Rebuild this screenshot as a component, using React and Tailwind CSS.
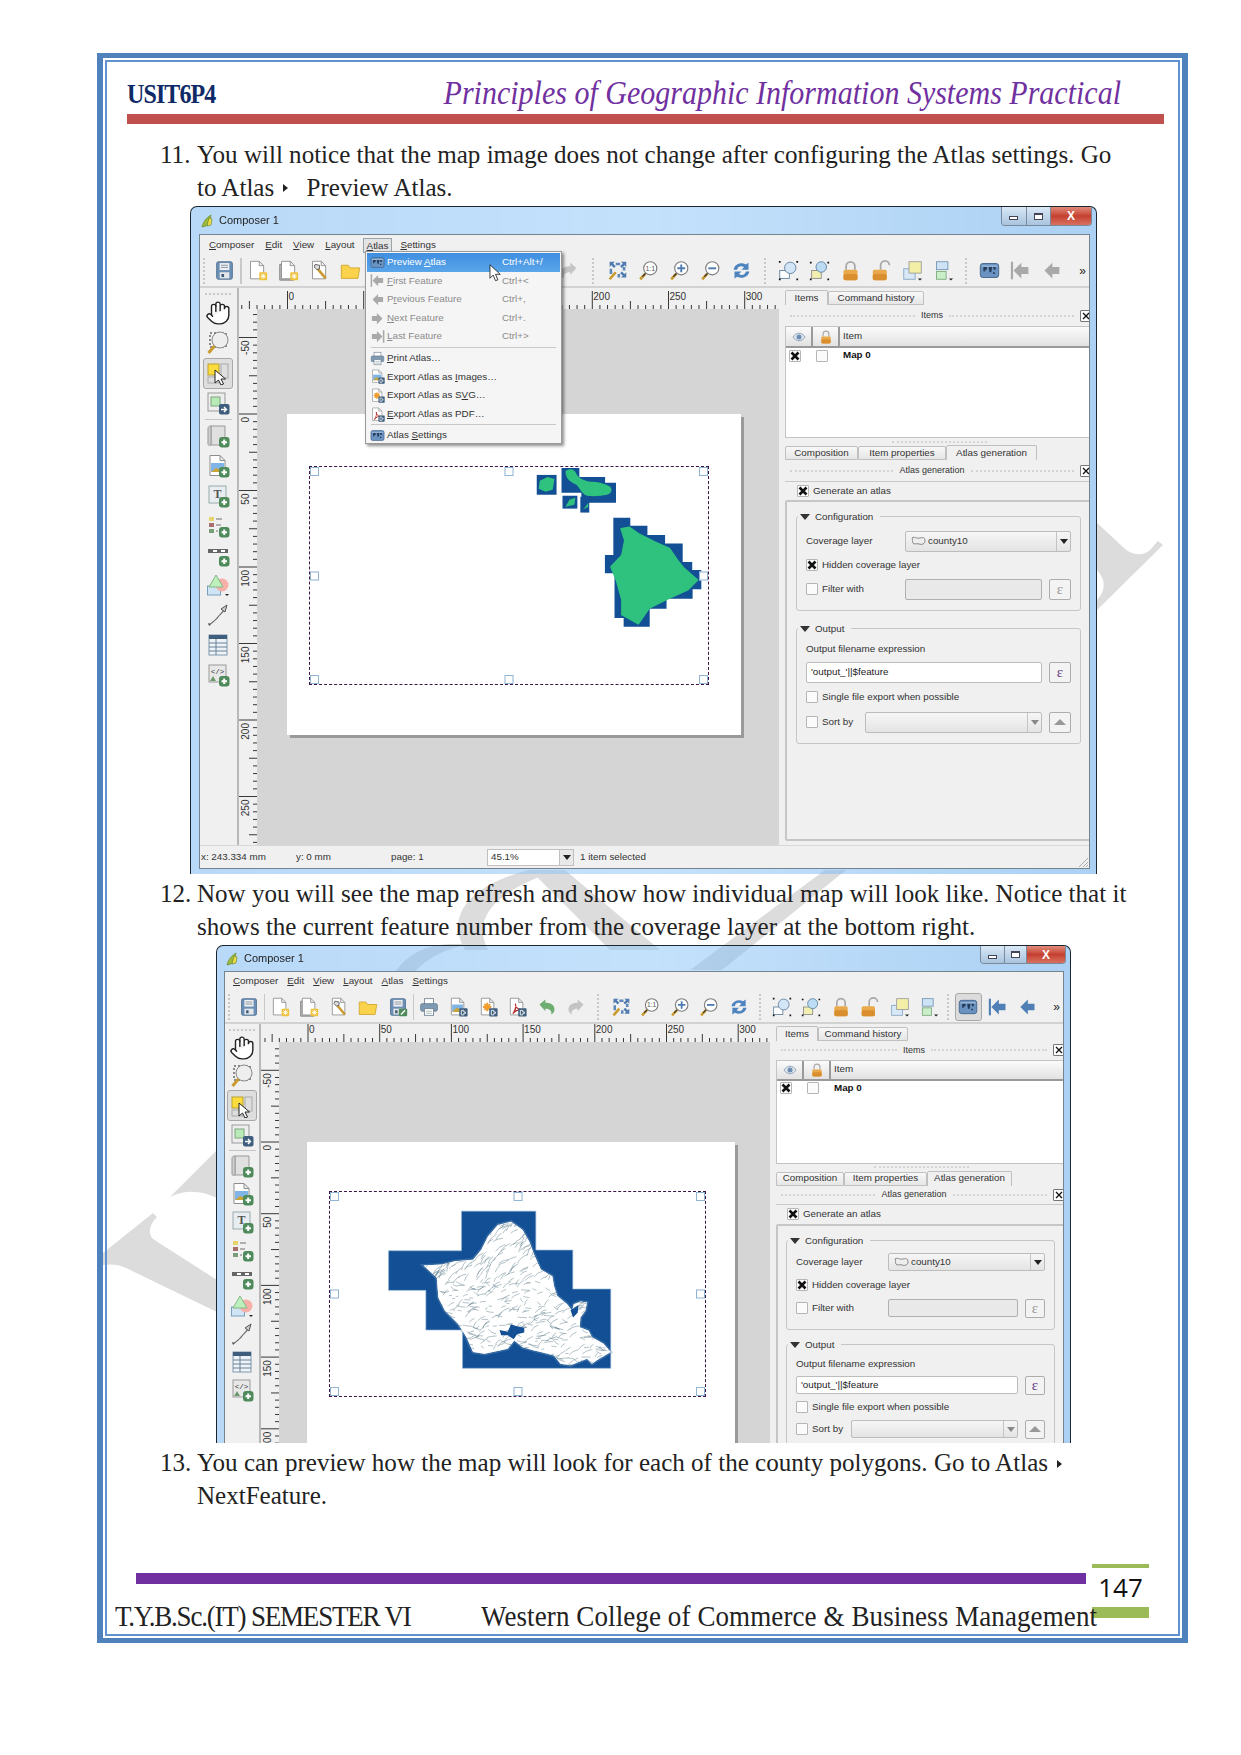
import { Hand } from "lucide-react";

const big = {
  win: "w-[907px] h-[668px]",
  titleBar: "h-[27px] pl-[9px]",
  winBtns: "w-[91px] h-[19px]",
  client: "ml-[8px] mr-[6px] h-[635px]",
  menuBar: "h-[20px] pl-[9px] gap-[11px]",
  toolBar: "h-[33px]",
  cell: "w-[31px]",
  iconSize: 21,
  g0: "w-[9px]",
  g1: "w-[18px]",
  g2: "w-[16px]",
  g3: "w-[15px]",
  side: "w-[37px] pr-[1px]",
  tool: "h-[29.8px]",
  canvasWrap: "w-[542px]",
  rulerTop: "h-[21px]",
  panel: "w-[314px]",
  tabs1: "h-[15px]",
  tItems: "w-[43px]",
  tCmd: "w-[96px]",
  dock: "h-[21px]",
  treeHead: "h-[21px]",
  tree: "h-[112px]",
  split: "h-[7px]",
  tabs2: "h-[15px]",
  tComp: "w-[73px]",
  tProp: "w-[88px]",
  tAtlas: "w-[91px]",
  genRow: "h-[18px] pl-[12px]",
  box: "pt-[14px] px-[9px] h-[341px] gap-[17px]",
  group1: "h-[95px] pt-[14px] gap-[4px]",
  group2: "h-[116px] pt-[12px] gap-[5px]",
  labelCol: "w-[99px]",
  rowH: "h-[20px]",
  fieldH: "h-[21px]",
  eps: "w-[22px] h-[21px]",
  sortLabel: "w-[59px]",
  status: "h-[23px]",
};

const small = {
  win: "w-[855px] h-[498px]",
  titleBar: "h-[25px] pl-[8px]",
  winBtns: "w-[86px] h-[18px]",
  client: "ml-[7px] mr-[6px] h-[473px] border-b-0",
  menuBar: "h-[19px] pl-[8px] gap-[9px]",
  toolBar: "h-[33px]",
  cell: "w-[29.5px]",
  iconSize: 20,
  g0: "w-[9px]",
  g1: "w-[15px]",
  g2: "w-[13.5px]",
  g3: "w-[9.5px]",
  side: "w-[34px]",
  tool: "h-[28px]",
  canvasWrap: "w-[511px]",
  rulerTop: "h-[18px]",
  panel: "w-[296px]",
  tabs1: "h-[15px]",
  tItems: "w-[42px]",
  tCmd: "w-[90px]",
  dock: "h-[18.5px]",
  treeHead: "h-[20px]",
  tree: "h-[104px]",
  split: "h-[7px]",
  tabs2: "h-[15px]",
  tComp: "w-[68px]",
  tProp: "w-[83px]",
  tAtlas: "w-[85px]",
  genRow: "h-[18.5px] pl-[11px]",
  box: "pt-[14px] px-[8px] h-[340px] gap-[14px]",
  group1: "h-[90px] pt-[12px] gap-[4px]",
  group2: "h-[116px] pt-[12px] gap-[3px]",
  labelCol: "w-[92px]",
  rowH: "h-[19px]",
  fieldH: "h-[18px]",
  eps: "w-[20px] h-[19px]",
  sortLabel: "w-[55px]",
  status: "h-[23px]",
};

const plus = (
  <g>
    <rect x="13" y="13" width="10.5" height="10.5" rx="3" fill="#4f8a5b" />
    <path d="M18.2 15.5v5.5M15.5 18.2h5.5" stroke="#fff" strokeWidth="2" />
  </g>
);
const badge = (
  <g>
    <rect x="13.5" y="13.5" width="10" height="10" rx="1" fill="#3f5d7c" />
    <path d="M16 16h3v2h2v1.5h-2v2h-3z" fill="none" stroke="#fff" strokeWidth="1" />
  </g>
);
const doc = <path d="M4 1.5h10l5 5v15H4z M14 1.5v5h5" fill="#fff" stroke="#8d8d8d" />;
const star = (
  <g>
    <rect x="14" y="14" width="9" height="9" rx="1" fill="#efc23e" />
    <path d="M18.5 15.5v6M15.5 18.5h6M16.3 16.3l4.4 4.4M20.7 16.3l-4.4 4.4" stroke="#fff" strokeWidth="1" />
  </g>
);
const lens = (
  <g>
    <circle cx="14" cy="9.5" r="7.5" fill="#fff" stroke="#7d7d7d" strokeWidth="1.3" />
    <path d="M8.5 15.5L2.5 22" stroke="#c99a2e" strokeWidth="3" />
    <path d="M8.5 15.5L5 19" stroke="#333" strokeWidth="1.5" />
  </g>
);
const saveShape = (
  <g>
    <rect x="3" y="2" width="18" height="20" rx="2" fill="#6b8fb5" stroke="#50708f" />
    <rect x="6.5" y="3.5" width="11" height="8" fill="#eef0f2" />
    <path d="M8 6h8M8 8.5h8" stroke="#7d8b99" />
    <rect x="6.5" y="14" width="11" height="7" fill="#e4e7ea" />
    <rect x="8.5" y="16" width="3" height="3.5" fill="#3e5a75" />
  </g>
);

function arrowIcon(color, mirrored, bar) {
  return (
    <g transform={mirrored ? "translate(24 0) scale(-1 1)" : undefined}>
      <path d="M20 12l-9-9v5H3v8h8v5z" fill={color} />
      {bar && <rect x="20.5" y="2" width="2.5" height="20" fill={color} />}
    </g>
  );
}

const glyphs = {
  save: saveShape,
  saveAs: (
    <g>
      {saveShape}
      <rect x="13" y="14" width="10" height="9" rx="1" fill="#4f8a5b" />
      <path d="M15.5 21l5-5" stroke="#fff" strokeWidth="1.6" />
    </g>
  ),
  newDoc: <g>{doc}{star}</g>,
  dup: (
    <g>
      <path d="M2 5h3v16h13v2H2z" fill="#bbb" stroke="#7a7a7a" />
      {doc}
      {star}
    </g>
  ),
  manager: (
    <g>
      {doc}
      <path d="M9 9l10 12" stroke="#c99a2e" strokeWidth="3" />
      <path d="M7 5l5 1 0 4-3 1-3-3z" fill="#ddd" stroke="#555" />
    </g>
  ),
  folder: <path d="M1.5 6h8l2 3h11l-2 12H1.5z" fill="#fbd24c" stroke="#cfa52b" />,
  print: (
    <g>
      <rect x="6.5" y="2" width="11" height="7" fill="#fff" stroke="#708090" />
      <rect x="2" y="8" width="20" height="9" rx="2" fill="#7f9ab3" stroke="#5d7890" />
      <rect x="6.5" y="14" width="11" height="8" fill="#fff" stroke="#708090" />
      <path d="M8.5 17h7M8.5 19.5h7" stroke="#9aa" />
    </g>
  ),
  expImg: (
    <g>
      {doc}
      <rect x="5" y="9" width="13" height="9" fill="#7fb4e6" />
      <path d="M5 18l5-5 8 3v2z" fill="#c9a43a" />
      {badge}
    </g>
  ),
  expSvg: (
    <g>
      {doc}
      <path d="M11 7v10M6 12h10M7.5 8.5l7 7M14.5 8.5l-7 7" stroke="#ef9d2f" strokeWidth="2.4" />
      {badge}
    </g>
  ),
  expPdf: (
    <g>
      {doc}
      <path d="M7 20c3-4 4-9 3-12 0 4 3 7 7 7-4 0-7 1-10 5z" fill="none" stroke="#b8312f" strokeWidth="1.5" />
      {badge}
    </g>
  ),
  undo: <path d="M3 9l7-6v4c7 0 11 3 11 8 0 3-2 5-4 6 1-4-1-7-7-7v3z" fill="#6fae72" />,
  redo: <path d="M21 9l-7-6v4C7 7 3 10 3 15c0 3 2 5 4 6-1-4 1-7 7-7v3z" fill="#c4c4c4" />,
  zoomFull: (
    <g>
      <path d="M3 2h6L7 4l3 3-2 2-3-3-2 2zM22 2v6l-2-2-3 3-2-2 3-3-2-2zM22 20h-6l2-2-3-3 2-2 3 3 2-2z" fill="#4f7bb0" />
      <path d="M3 10h3v6H3zM18 8h3v4h-3zM10 3h5v3h-5zM12 16h3v4h-3z" fill="#5f88ba" />
      <path d="M10 14L3 22" stroke="#c99a2e" strokeWidth="3" />
    </g>
  ),
  zoom11: (
    <g>
      {lens}
      <text x="14" y="12.5" fontSize="8" textAnchor="middle" fill="#555" fontFamily="Liberation Sans">1:1</text>
    </g>
  ),
  zoomIn: (
    <g>
      {lens}
      <path d="M14 5v9M9.5 9.5h9" stroke="#4f7bb0" strokeWidth="2.2" />
    </g>
  ),
  zoomOut: (
    <g>
      {lens}
      <path d="M9.5 9.5h9" stroke="#4f7bb0" strokeWidth="2.2" />
    </g>
  ),
  refresh: (
    <g fill="#4d84bf">
      <path d="M3 11c1-6 8-9 14-6l3-2v8h-8l3-3c-4-2-7-1-8 3z" />
      <path d="M21 13c-1 6-8 9-14 6l-3 2v-8h8l-3 3c4 2 7 1 8-3z" />
    </g>
  ),
  select: (
    <g>
      <rect x="2" y="12" width="11" height="9" fill="#fff" stroke="#5d7d9c" />
      <circle cx="14" cy="9" r="6.5" fill="#d3e6f7" stroke="#5d7d9c" />
      <path d="M1 2h2M21 2h2M1 22h2M21 22h2" stroke="#111" strokeWidth="2" />
    </g>
  ),
  selectIn: (
    <g>
      <rect x="3" y="12" width="11" height="9" fill="#f3efb0" stroke="#888" />
      <circle cx="14" cy="8" r="6" fill="#bcdcf5" stroke="#5d7d9c" />
      <path d="M1 3h2M21 3h2M1 22h2M21 22h2" stroke="#111" strokeWidth="2" />
    </g>
  ),
  lock: (
    <g>
      <path d="M7 11V7a5 5 0 0 1 10 0v4" fill="none" stroke="#a8a8a8" strokeWidth="2" />
      <rect x="4" y="11" width="16" height="12" rx="2" fill="#e9a849" />
      <rect x="4" y="16" width="16" height="7" rx="2" fill="#d98f2f" />
    </g>
  ),
  unlock: (
    <g>
      <path d="M11 11V6a5 5 0 0 1 10 0" fill="none" stroke="#a8a8a8" strokeWidth="2" />
      <rect x="2" y="11" width="16" height="12" rx="2" fill="#e9a849" />
      <rect x="2" y="16" width="16" height="7" rx="2" fill="#d98f2f" />
    </g>
  ),
  raise: (
    <g>
      <rect x="2" y="10" width="13" height="12" fill="#d8e8f6" stroke="#85a5c3" />
      <rect x="8" y="2" width="14" height="13" fill="#f4efa7" stroke="#999" />
      <path d="M18 21h5l-2.5 2.5z" fill="#222" />
    </g>
  ),
  align: (
    <g>
      <rect x="4" y="2" width="13" height="9" fill="#cfe3f6" stroke="#6f93b3" />
      <rect x="4" y="13" width="11" height="9" fill="#c8efc8" stroke="#7ca67c" />
      <path d="M18 21h5l-2.5 2.5z" fill="#222" />
    </g>
  ),
  atlas: (
    <g>
      <rect x="1.5" y="4" width="21" height="16" rx="3" fill="#6a93c2" stroke="#3f5f85" />
      <path d="M5 8h4v3H7v2H5zM11 8h4l-1 6h-2zM16 8h3v3h-2zM16 14h2v2h-2z" fill="#243b58" />
      <path d="M3 7h18" stroke="#b7cde5" />
    </g>
  ),
  hand: null,
  magnify: (
    <g>
      <rect x="4" y="2" width="16" height="14" fill="none" stroke="#222" strokeDasharray="2 2" />
      <circle cx="14" cy="9" r="8" fill="#eee" stroke="#8a8a8a" />
      <path d="M8.5 15L2.5 22" stroke="#c99a2e" strokeWidth="3" />
    </g>
  ),
  pointer: (
    <g>
      <rect x="2" y="3" width="11" height="11" fill="#fbdc3d" stroke="#b9a12e" />
      <rect x="15" y="3" width="7" height="14" fill="none" stroke="#aaa" />
      <rect x="2" y="16" width="11" height="6" fill="none" stroke="#aaa" />
      <path d="M9 9v13l3.5-3 2.5 5 2.5-1-2.5-5h4.5z" fill="#fff" stroke="#222" />
    </g>
  ),
  moveItem: (
    <g>
      <rect x="2" y="2" width="17" height="18" fill="#eee" stroke="#999" />
      <rect x="5" y="6" width="9" height="9" fill="#b8eab8" stroke="#7ca67c" />
      <rect x="13" y="13" width="10.5" height="10.5" rx="2" fill="#3f5d7c" />
      <path d="M15 18.5h5M18 16l2.5 2.5L18 21" stroke="#fff" strokeWidth="1.4" fill="none" />
    </g>
  ),
  addMap: (
    <g>
      <path d="M5 2h14v19H5z" fill="#e0e0e0" stroke="#999" />
      <path d="M5 2c-3 0-3 2-3 3v15c0 1 1 2 3 1z" fill="#d0d0d0" stroke="#999" />
      {plus}
    </g>
  ),
  addImage: (
    <g>
      {doc}
      <rect x="5" y="9" width="13" height="9" fill="#7fb4e6" />
      <path d="M5 18l5-4 8 3v1z" fill="#c9a43a" />
      {plus}
    </g>
  ),
  addLabel: (
    <g>
      <rect x="3" y="2" width="17" height="17" fill="#e8edf2" stroke="#9aa" />
      <text x="11.5" y="14" fontSize="12" fontWeight="bold" textAnchor="middle" fill="#555" fontFamily="Liberation Serif">T</text>
      {plus}
    </g>
  ),
  addLegend: (
    <g>
      <rect x="3" y="3" width="5" height="4" fill="#e6d36b" />
      <rect x="3" y="9" width="5" height="4" fill="#a86e6e" />
      <rect x="3" y="15" width="5" height="4" fill="#7a9d7a" />
      <path d="M10 5h6M10 11h5M10 17h2" stroke="#999" strokeWidth="1.5" />
      {plus}
    </g>
  ),
  addScale: (
    <g>
      <rect x="2" y="6" width="20" height="4" fill="#666" />
      <path d="M7 8h4M15 8h4" stroke="#fff" strokeWidth="2" />
      {plus}
    </g>
  ),
  addShape: (
    <g>
      <rect x="1.5" y="13" width="13" height="9" fill="#cfe5f6" stroke="#7aa0c0" />
      <circle cx="16" cy="12" r="6.5" fill="#f6b0a8" />
      <path d="M10 2l7 12H3z" fill="#bdf0bd" stroke="#85b885" />
      <path d="M19 21h4l-2 2z" fill="#222" />
    </g>
  ),
  addArrow: (
    <g>
      <path d="M3 22c4-3 7-5 9-8s5-4 8-10" fill="none" stroke="#666" strokeWidth="1.2" />
      <path d="M21 2l-2 7-4-3z" fill="#ccc" stroke="#555" />
      <path d="M2 20l3 1-2 2z" fill="#555" />
    </g>
  ),
  addTable: (
    <g>
      <rect x="3" y="2" width="18" height="20" fill="#eef3f7" stroke="#7f98ad" />
      <rect x="3" y="2" width="18" height="4" fill="#3f5d7c" />
      <path d="M3 10h18M3 14h18M3 18h18M10 6v16" stroke="#6b8096" />
    </g>
  ),
  addHtml: (
    <g>
      <rect x="3" y="2" width="17" height="17" fill="#e8e8e8" stroke="#999" />
      <text x="11.5" y="11" fontSize="7.5" textAnchor="middle" fill="#333" fontFamily="Liberation Mono">&lt;/&gt;</text>
      <path d="M4 18l3-5 3 5z" fill="#6c9a6c" />
      {plus}
    </g>
  ),
};

function Icon({ name, size = 21 }) {
  if (name === "hand") return <Hand size={size + 2} strokeWidth={1.3} color="#222" fill="#fff" />;
  if (name === "first") return <svg width={size} height={size} viewBox="0 0 24 24">{arrowIcon("#a9a9a9", true, true)}</svg>;
  if (name === "prev") return <svg width={size} height={size} viewBox="0 0 24 24">{arrowIcon("#a9a9a9", true, false)}</svg>;
  if (name === "firstOn") return <svg width={size} height={size} viewBox="0 0 24 24">{arrowIcon("#4f7fb5", true, true)}</svg>;
  if (name === "prevOn") return <svg width={size} height={size} viewBox="0 0 24 24">{arrowIcon("#4f7fb5", true, false)}</svg>;
  if (name === "next") return <svg width={size} height={size} viewBox="0 0 24 24">{arrowIcon("#a9a9a9", false, false)}</svg>;
  if (name === "last") return <svg width={size} height={size} viewBox="0 0 24 24">{arrowIcon("#a9a9a9", false, true)}</svg>;
  return <svg width={size} height={size} viewBox="0 0 24 24">{glyphs[name]}</svg>;
}

function Grip({ className = "" }) {
  return (
    <div className={`flex justify-center items-center h-full shrink-0 ${className}`}>
      <div className="w-[3px] h-[26px] border-l-2 border-dotted border-[#c8c8c8]" />
    </div>
  );
}

function Tool({ cfg, name, pressed }) {
  return (
    <div className={`flex items-center justify-center shrink-0 ${cfg.cell}`}>
      <div className={`flex items-center justify-center w-[27px] h-[28px] rounded-[3px] ${pressed ? "bg-[#dcdcdc] border border-[#a8a8a8]" : ""}`}>
        <Icon name={name} size={cfg.iconSize} />
      </div>
    </div>
  );
}

function Toolbar({ cfg, atlasOn }) {
  const t = (name) => <Tool cfg={cfg} name={name} key={name} />;
  return (
    <div className={`flex items-center border-b-2 border-[#d2d2d2] ${cfg.toolBar}`}>
      <Grip className={cfg.g0} />
      {t("save")}
      <div className="w-[1.5px] h-[26px] bg-[#c8c8c8] shrink-0" />
      {["newDoc", "dup", "manager", "folder", "saveAs"].map(t)}
      <div className="w-[1.5px] h-[26px] bg-[#c8c8c8] shrink-0" />
      {["print", "expImg", "expSvg", "expPdf", "undo", "redo"].map(t)}
      <Grip className={cfg.g1} />
      {["zoomFull", "zoom11", "zoomIn", "zoomOut", "refresh"].map(t)}
      <Grip className={cfg.g2} />
      {["select", "selectIn", "lock", "unlock", "raise", "align"].map(t)}
      <Grip className={cfg.g3} />
      {atlasOn ? (
        <>
          <Tool cfg={cfg} name="atlas" pressed />
          {t("firstOn")}
          {t("prevOn")}
        </>
      ) : (
        <>
          {t("atlas")}
          {t("first")}
          {t("prev")}
        </>
      )}
      <div className="flex-1 text-right pr-[3px] text-[12px] text-[#222]">»</div>
    </div>
  );
}

function SideBar({ cfg }) {
  const tools = ["hand", "magnify", "pointer", "moveItem", "addMap", "addImage", "addLabel", "addLegend", "addScale", "addShape", "addArrow", "addTable", "addHtml"];
  return (
    <div className={`flex flex-col items-center shrink-0 ${cfg.side}`}>
      <div className="h-[8px] w-[26px] mt-[2px] border-t-2 border-dotted border-[#c8c8c8] translate-y-[3px]" />
      {tools.map((name) => (
        <div key={name} className="flex flex-col items-center">
          {name === "addMap" && <div className="w-[27px] h-[1px] bg-[#c4c4c4] my-[1px]" />}
          <div className={`flex items-center justify-center w-[30px] ${cfg.tool} ${name === "pointer" ? "bg-[#dedede] border border-[#a8a8a8] rounded-[3px] h-[31px]" : ""}`}>
            <Icon name={name} size={24} />
          </div>
        </div>
      ))}
    </div>
  );
}

function HRuler({ width, zero, scale, labels }) {
  const ticks = [];
  for (let mm = -50; zero + (mm * scale) / 50 < width; mm += 5) {
    const x = zero + (mm * scale) / 50;
    if (x < 0) continue;
    const h = mm % 50 === 0 ? 18 : mm % 25 === 0 ? 8 : 4;
    ticks.push(<line key={mm} x1={x} x2={x} y1={20 - h} y2={20} stroke="#222" strokeWidth="0.9" />);
  }
  return (
    <svg width={width} height="20" className="block shrink-0">
      {ticks}
      {labels.map((l) => (
        <text key={l} x={zero + (l * scale) / 50 + 1} y="11" fontSize="10" fill="#333" fontFamily="Liberation Sans">{l}</text>
      ))}
    </svg>
  );
}

function VRuler({ height, zero, scale }) {
  const ticks = [];
  const labels = [];
  for (let mm = -150; zero + (mm * scale) / 50 < height; mm += 5) {
    const y = zero + (mm * scale) / 50;
    if (y < 0) continue;
    const major = mm % 50 === 0;
    const w = major ? 18 : mm % 25 === 0 ? 8 : 4;
    ticks.push(<line key={mm} x1={18 - w} x2={18} y1={y} y2={y} stroke="#222" strokeWidth="0.9" />);
    if (major) {
      labels.push(
        <text key={mm} transform={`translate(10 ${y + 3}) rotate(-90)`} textAnchor="end" fontSize="10" fill="#333" fontFamily="Liberation Sans">{mm}</text>
      );
    }
  }
  return (
    <svg width="18" height={height} className="block shrink-0 overflow-visible">
      {ticks}
      {labels}
    </svg>
  );
}

function Handles() {
  const spots = [
    "left-0 top-0",
    "left-1/2 -translate-x-1/2 top-0",
    "right-0 top-0",
    "left-0 top-1/2 -translate-y-1/2",
    "right-0 top-1/2 -translate-y-1/2",
    "left-0 bottom-0",
    "left-1/2 -translate-x-1/2 bottom-0",
    "right-0 bottom-0",
  ];
  return spots.map((s) => <div key={s} className={`absolute w-[9px] h-[9px] border border-[#8fb4d4] bg-white ${s}`} />);
}

function HawaiiMap() {
  const bx = (x) => x / 2.703 + 190;
  const by = (y) => y / 3 + 500;
  const pts = (list) => list.map(([x, y]) => `${bx(x).toFixed(1)},${by(y).toFixed(1)}`).join(" ");
  const blue = [[1147,52],[1193,52],[1193,76],[1240,76],[1240,104],[1288,104],[1288,130],[1336,130],[1336,186],[1362,186],[1362,210],[1387,210],[1387,268],[1363,268],[1363,297],[1292,297],[1292,327],[1246,327],[1246,382],[1175,382],[1175,355],[1150,355],[1150,220],[1124,220],[1124,164],[1147,164]];
  const green = [[1168,85],[1190,80],[1215,100],[1260,125],[1300,145],[1322,180],[1340,205],[1377,240],[1350,270],[1290,300],[1245,325],[1215,373],[1170,345],[1170,300],[1155,240],[1140,200],[1170,165],[1178,120]];
  return (
    <svg viewBox="309 466 400 219" className="absolute inset-0 w-full h-full">
      <polygon points={pts(blue)} fill="#124f94" />
      <polygon points={pts(green)} fill="#2fc27f" stroke="#2fc27f" strokeWidth="1.5" strokeLinejoin="round" />
      <polygon points="537,474 557,474 557,494 537,494" fill="#124f94" />
      <polygon points="540,480 548,476 555,478 553,489 546,491 539,488" fill="#2fc27f" />
      <polygon points="562,467 580,467 580,476 606,476 606,482 617,482 617,502 582,502 582,492 562,492" fill="#124f94" />
      <path d="M566 470c5-3 9-2 11 3 3 5 9 7 15 8 6 0 12 1 19 5 3 3 1 7-3 8-6 1-13 2-20 1-5-1-7-7-11-11-5-3-11-5-11-14z" fill="#2fc27f" />
      <polygon points="563,495 578,495 578,508 563,508" fill="#124f94" />
      <polygon points="566,506 570,499 576,497 575,504" fill="#2fc27f" />
      <polygon points="581,496 590,496 590,512 581,512" fill="#124f94" />
      <polygon points="584,509 589,502 589,506" fill="#2fc27f" />
    </svg>
  );
}

const streamPath = (() => {
  let s = 12345;
  const r = () => {
    s = (s * 16807) % 2147483647;
    return s / 2147483647;
  };
  let d = "";
  for (let i = 0; i < 760; i++) {
    const x = 250 + r() * 560;
    const y = 150 + r() * 440;
    const north = y < 330;
    const dx = (north ? 10 : 8) + r() * 22;
    const dy = north ? -8 - r() * 22 : 14 - r() * 34;
    d += `M${x.toFixed(0)} ${y.toFixed(0)}q${(dx * 0.3).toFixed(0)} ${(dy * 0.7).toFixed(0)} ${dx.toFixed(0)} ${dy.toFixed(0)}`;
  }
  return d;
})();

const oahu = "M245 283L300 280 340 270 395 265 420 235 440 195 470 160 510 150 545 175 565 210 580 250 600 295 635 315 640 345 650 375 680 400 695 420 700 400 720 392 740 395 735 420 720 440 718 470 745 480 755 500 790 520 812 545 770 570 755 580 740 565 690 585 660 580 640 555 600 545 580 540 545 530 520 510 500 535 430 550 395 545 375 500 350 460 310 420 290 380 285 320Z";

function OahuMap() {
  return (
    <svg viewBox="328 1190 377 206" className="absolute inset-0 w-full h-full">
      <defs>
        <clipPath id="oahu-clip">
          <path d={oahu} />
        </clipPath>
      </defs>
      <g transform="translate(340 1170) scale(0.33333)">
        <polygon points="360,118 585,118 585,236 697,236 697,354 812,354 812,594 363,594 363,478 252,478 252,358 139,358 139,238 360,238" fill="#124f94" stroke="#8cb0d4" strokeWidth="2" />
        <path d={oahu} fill="#fff" stroke="#7fa0bf" strokeWidth="10" strokeOpacity="0.35" />
        <path d={oahu} fill="#fff" />
        <path d={streamPath} clipPath="url(#oahu-clip)" fill="none" stroke="#65828f" strokeWidth="1.5" />
        <path d="M475 478l25 5 10-22 15 5 25 5 0 15-22 5-10 15-18-12-20 0z" fill="#124f94" />
        <path d="M690 418l8 22 14-15 2-22z" fill="#124f94" />
      </g>
    </svg>
  );
}

function Canvas({ children, className }) {
  return <div className={`relative overflow-hidden bg-[#d5d5d5] ${className}`}>{children}</div>;
}

function Check({ on }) {
  return (
    <div className="flex items-center justify-center w-[12px] h-[12px] shrink-0 border border-[#b5b5b5] rounded-[1px] bg-[#fbfbfb]">
      {on && (
        <svg width="10" height="10" viewBox="0 0 10 10">
          <path d="M1.5 1.5l7 7M8.5 1.5l-7 7" stroke="#111" strokeWidth="2.6" />
        </svg>
      )}
    </div>
  );
}

function Tab({ className, active, label }) {
  return (
    <div className={`flex items-center justify-center border border-[#c0c0c0] rounded-t-[2px] whitespace-nowrap ${className} ${active ? "bg-[#f0f0f0] border-b-0 h-full" : "bg-linear-to-b from-[#f8f8f8] to-[#e6e6e6] h-[calc(100%-1px)] mt-[1px]"}`}>
      {label}
    </div>
  );
}

function DockTitle({ cfg, label }) {
  return (
    <div className={`flex items-center shrink-0 gap-[6px] text-[9px] pl-[5px] pr-[2px] ${cfg.dock}`}>
      <div className="flex-1 border-t-2 border-dotted border-[#d4d4d4]" />
      <span>{label}</span>
      <div className="flex-1 border-t-2 border-dotted border-[#d4d4d4]" />
      <div className="flex items-center justify-center w-[11px] h-[12px] border border-[#777] rounded-[1px] bg-white">
        <svg width="8" height="8" viewBox="0 0 8 8">
          <path d="M1 1l6 6M7 1l-6 6" stroke="#111" strokeWidth="1.3" />
        </svg>
      </div>
    </div>
  );
}

function Combo({ cfg, className, children, arrow = "#222" }) {
  return (
    <div className={`flex items-center border border-[#bcbcbc] rounded-[2px] bg-linear-to-b from-[#f6f6f6] to-[#e4e4e4] ${cfg.fieldH} ${className}`}>
      <div className="flex-1 flex items-center pl-[5px] gap-[2px]">{children}</div>
      <div className="flex items-center justify-center w-[14px] h-full border-l border-[#c4c4c4]">
        <div className="w-0 h-0 border-x-[4px] border-x-transparent border-t-[5px]" style={{ borderTopColor: arrow }} />
      </div>
    </div>
  );
}

function EpsBtn({ cfg, on }) {
  return (
    <div className={`flex items-center justify-center border border-[#adadad] rounded-[2px] bg-[#f3f3f3] text-[15px] font-['Liberation_Serif',serif] shrink-0 ${cfg.eps} ${on ? "text-[#66407f]" : "text-[#999]"}`}>
      ε
    </div>
  );
}

function Group({ title, className, children }) {
  return (
    <div className={`relative flex flex-col shrink-0 border border-[#c6c6c6] rounded-[3px] pl-[9px] pr-[9px] ${className}`}>
      <div className="absolute -top-[7px] left-[1px] flex items-center gap-[5px] pl-[1px] pr-[7px] bg-[#f0f0f0]">
        <div className="w-0 h-0 border-x-[5px] border-x-transparent border-t-[6px] border-t-[#333] ml-[1px]" />
        <span>{title}</span>
      </div>
      {children}
    </div>
  );
}

function Panel({ cfg }) {
  return (
    <div className={`flex flex-col shrink-0 pl-[6px] pt-[2px] text-[9.8px] text-[#333] ${cfg.panel}`}>
      <div className={`flex shrink-0 ${cfg.tabs1}`}>
        <Tab className={cfg.tItems} active label="Items" />
        <Tab className={cfg.tCmd} label="Command history" />
      </div>
      <DockTitle cfg={cfg} label="Items" />
      <div className={`flex flex-col shrink-0 border border-[#c4c4c4] bg-white mr-[1px] ${cfg.tree}`}>
        <div className={`flex shrink-0 bg-linear-to-b from-[#fbfbfb] to-[#e2e2e2] border-b-2 border-[#9a9a9a] ${cfg.treeHead}`}>
          <div className="flex items-center justify-center w-[27px] border-r-2 border-[#9a9a9a]">
            <svg width="14" height="10" viewBox="0 0 14 10">
              <path d="M1 5c3-5 9-5 12 0-3 5-9 5-12 0z" fill="#dfe6ee" stroke="#94a5b8" />
              <circle cx="7" cy="5" r="2.5" fill="#6e8db3" />
            </svg>
          </div>
          <div className="flex items-center justify-center w-[27px] border-r-2 border-[#9a9a9a]">
            <Icon name="lock" size={14} />
          </div>
          <div className="flex items-center pl-[3px]">Item</div>
        </div>
        <div className="flex items-center h-[15px] shrink-0">
          <div className="w-[27px] pl-[3px]"><Check on /></div>
          <div className="w-[27px] pl-[3px]"><Check /></div>
          <span className="font-bold text-[#111] pl-[3px]">Map 0</span>
        </div>
      </div>
      <div className={`flex justify-center items-center shrink-0 ${cfg.split}`}>
        <div className="w-[95px] border-t-2 border-dotted border-[#d4d4d4]" />
      </div>
      <div className={`flex shrink-0 ${cfg.tabs2}`}>
        <Tab className={cfg.tComp} label="Composition" />
        <Tab className={cfg.tProp} label="Item properties" />
        <Tab className={cfg.tAtlas} active label="Atlas generation" />
      </div>
      <DockTitle cfg={cfg} label="Atlas generation" />
      <div className="flex flex-col shrink-0 border-t border-[#c8c8c8] mr-[1px]">
        <div className={`flex items-center gap-[4px] shrink-0 ${cfg.genRow}`}>
          <Check on />
          <span>Generate an atlas</span>
        </div>
        <div className={`flex flex-col shrink-0 border-2 border-[#c6c6c6] rounded-[2px] ${cfg.box}`}>
          <Group title="Configuration" className={cfg.group1}>
            <div className={`flex items-center ${cfg.rowH}`}>
              <div className={`shrink-0 ${cfg.labelCol}`}>Coverage layer</div>
              <Combo cfg={cfg} className="flex-1">
                <svg width="15" height="10" viewBox="0 0 15 10">
                  <path d="M1 2c3-2 4 1 8 0s5 0 5 3-3 4-6 3-5 1-6-1 0-3-1-5z" fill="#eee" stroke="#888" />
                </svg>
                <span>county10</span>
              </Combo>
            </div>
            <div className={`flex items-center gap-[4px] ${cfg.rowH}`}>
              <Check on />
              <span>Hidden coverage layer</span>
            </div>
            <div className={`flex items-center ${cfg.rowH}`}>
              <div className={`shrink-0 flex items-center gap-[4px] ${cfg.labelCol}`}>
                <Check />
                <span>Filter with</span>
              </div>
              <div className={`flex-1 border border-[#b0b0b0] rounded-[2px] bg-[#e9e9e9] ${cfg.fieldH}`} />
              <div className="w-[7px] shrink-0" />
              <EpsBtn cfg={cfg} />
            </div>
          </Group>
          <Group title="Output" className={cfg.group2}>
            <div className="h-[16px] flex items-center">Output filename expression</div>
            <div className={`flex items-center ${cfg.rowH}`}>
              <div className={`flex-1 flex items-center border border-[#bcbcbc] rounded-[2px] bg-white pl-[4px] text-[#222] ${cfg.fieldH}`}>
                'output_'||$feature
              </div>
              <div className="w-[7px] shrink-0" />
              <EpsBtn cfg={cfg} on />
            </div>
            <div className={`flex items-center gap-[4px] ${cfg.rowH}`}>
              <Check />
              <span>Single file export when possible</span>
            </div>
            <div className={`flex items-center ${cfg.rowH}`}>
              <div className={`shrink-0 flex items-center gap-[4px] ${cfg.sortLabel}`}>
                <Check />
                <span>Sort by</span>
              </div>
              <Combo cfg={cfg} className="flex-1" arrow="#888" />
              <div className="w-[7px] shrink-0" />
              <div className={`flex items-center justify-center border border-[#adadad] rounded-[2px] bg-[#f3f3f3] shrink-0 ${cfg.eps}`}>
                <div className="w-0 h-0 border-x-[6px] border-x-transparent border-b-[6px] border-b-[#999]" />
              </div>
            </div>
          </Group>
        </div>
      </div>
    </div>
  );
}

function AtlasMenu() {
  const items = [
    { icon: "atlas", label: "Preview ", u: "A", rest: "tlas", key: "Ctrl+Alt+/", active: true },
    { icon: "first", label: "", u: "F", rest: "irst Feature", key: "Ctrl+<", off: true },
    { icon: "prev", label: "P", u: "r", rest: "evious Feature", key: "Ctrl+,", off: true },
    { icon: "next", label: "", u: "N", rest: "ext Feature", key: "Ctrl+.", off: true },
    { icon: "last", label: "", u: "L", rest: "ast Feature", key: "Ctrl+>", off: true, sep: true },
    { icon: "print", label: "", u: "P", rest: "rint Atlas…" },
    { icon: "expImg", label: "Export Atlas as ", u: "I", rest: "mages…" },
    { icon: "expSvg", label: "Export Atlas as S", u: "V", rest: "G…" },
    { icon: "expPdf", label: "", u: "E", rest: "xport Atlas as PDF…", sep: true },
    { icon: "atlas", label: "Atlas ", u: "S", rest: "ettings" },
  ];
  return (
    <div className="absolute left-[165px] top-[16px] w-[197px] h-[193px] flex flex-col py-[1px] px-[1px] bg-[#f5f5f5] border border-[#9a9a9a] shadow-[2px_2px_3px_rgba(0,0,0,0.45)] text-[9.8px] z-10">
      {items.map((it) => (
        <div key={it.u + it.rest}>
          <div className={`flex items-center h-[18.6px] ${it.active ? "bg-linear-to-b from-[#3f8ee0] to-[#5aa6ea] text-white" : it.off ? "text-[#8b8b8b]" : "text-[#333]"}`}>
            <div className="flex items-center justify-center w-[20px] shrink-0">
              <Icon name={it.icon} size={15} />
            </div>
            <div className="w-[115px] shrink-0 whitespace-nowrap">
              {it.label}
              <u>{it.u}</u>
              {it.rest}
            </div>
            <div className="whitespace-nowrap">{it.key}</div>
          </div>
          {it.sep && <div className="h-[1px] my-[1px] mx-[4px] bg-[#c8c8c8]" />}
        </div>
      ))}
      <svg width="13" height="19" viewBox="0 0 16 24" className="absolute left-[123px] top-[12px]">
        <path d="M1 1v17l4-4 3 7 3-1-3-7h6z" fill="#fff" stroke="#111" />
      </svg>
    </div>
  );
}

function MenuBar({ cfg, atlasOpen }) {
  const menu = [["", "C", "omposer"], ["", "E", "dit"], ["", "V", "iew"], ["", "L", "ayout"], ["", "A", "tlas"], ["", "S", "ettings"]];
  return (
    <div className={`flex items-center shrink-0 text-[9.8px] text-[#333] ${cfg.menuBar}`}>
      {menu.map(([a, u, rest]) => (
        <div key={u} className={`whitespace-nowrap ${u === "A" && atlasOpen ? "-mx-[3px] px-[3px] border border-[#9aa4ad] bg-[#e4e4e4] leading-[13px]" : ""}`}>
          {a}
          <u>{u}</u>
          {rest}
        </div>
      ))}
    </div>
  );
}

function WinButtons({ cfg }) {
  return (
    <div className={`flex mr-[4px] border border-t-0 border-[#7a8a9a] rounded-b-[4px] overflow-hidden shrink-0 ${cfg.winBtns}`}>
      <div className="flex-[25] flex items-center justify-center bg-linear-to-b from-[#d9e8f6] to-[#a9c4de] border-r border-[#7a8a9a]">
        <div className="w-[9px] h-[4px] mt-[4px] bg-white border border-[#445]" />
      </div>
      <div className="flex-[24] flex items-center justify-center bg-linear-to-b from-[#d9e8f6] to-[#a9c4de] border-r border-[#7a8a9a]">
        <div className="w-[9px] h-[7px] bg-white border border-[#445] border-t-2" />
      </div>
      <div className="flex-[42] flex items-center justify-center bg-linear-to-b from-[#e08a7a] via-[#c53f30] to-[#d8705f] text-white text-[12px] font-bold font-['Liberation_Sans',sans-serif]">
        X
      </div>
    </div>
  );
}

function StatusBar({ cfg }) {
  return (
    <div className={`flex items-center shrink-0 text-[9.8px] text-[#333] border-t border-[#d8d8d8] ${cfg.status}`}>
      <div className="w-[96px] pl-[1px]">x: 243.334 mm</div>
      <div className="w-[95px]">y: 0 mm</div>
      <div className="w-[96px]">page: 1</div>
      <div className="flex items-center w-[87px] h-[17px] border border-[#c0c0c0] bg-white pl-[3px]">
        <span className="flex-1">45.1%</span>
        <div className="flex items-center justify-center w-[14px] h-full bg-[#e8e8e8] border-l border-[#c0c0c0]">
          <div className="w-0 h-0 border-x-[4px] border-x-transparent border-t-[5px] border-t-[#222]" />
        </div>
      </div>
      <div className="pl-[6px] flex-1">1 item selected</div>
      <svg width="12" height="12" viewBox="0 0 12 12" className="self-end">
        <path d="M11 2L2 11M11 6l-5 5M11 9l-2 2" stroke="#aaa" />
      </svg>
    </div>
  );
}

function QgisWindow({ cfg, atlasOpen, atlasOn, hRuler, vRuler, children }) {
  return (
    <div className={`relative flex flex-col overflow-hidden rounded-t-[7px] border border-b-0 border-[#1c2630] bg-linear-to-r from-[#7db9f2]/55 via-[#8ac4f8]/50 to-[#74b2ec]/60 blur-[0.35px] font-['Liberation_Sans',sans-serif] ${cfg.win}`}>
      <div className={`flex items-start justify-between shrink-0 ${cfg.titleBar}`}>
        <div className="flex items-center gap-[5px] h-full text-[11px] text-[#222]">
          <svg width="14" height="14" viewBox="0 0 14 14">
            <path d="M2 13c1-5 4-9 9-12-1 5-2 8-5 11z" fill="#9dbb3a" stroke="#5a7a1c" strokeWidth="0.6" />
            <path d="M9 4l3 1-1 6-4 1z" fill="#f0df4a" stroke="#5a7a1c" strokeWidth="0.6" />
          </svg>
          <span>Composer 1</span>
        </div>
        <WinButtons cfg={cfg} />
      </div>
      <div className={`relative flex flex-col shrink-0 bg-[#f0f0f0] border border-[#75838f] ${cfg.client}`}>
        <MenuBar cfg={cfg} atlasOpen={atlasOpen} />
        <Toolbar cfg={cfg} atlasOn={atlasOn} />
        <div className="flex flex-1 min-h-0 overflow-hidden">
          <SideBar cfg={cfg} />
          <div className={`flex flex-col shrink-0 border-l-2 border-[#b8b8b8] ${cfg.canvasWrap}`}>
            <div className={`flex justify-start items-end overflow-hidden shrink-0 ${cfg.rulerTop}`}>
              <HRuler {...hRuler} />
            </div>
            <div className="flex flex-1 min-h-0">
              <VRuler {...vRuler} />
              <Canvas className="flex-1">{children}</Canvas>
            </div>
          </div>
          <Panel cfg={cfg} />
        </div>
        {atlasOpen && <StatusBar cfg={cfg} />}
        {atlasOpen && <AtlasMenu />}
      </div>
    </div>
  );
}

function Watermark() {
  return (
    <svg width="1241" height="1755" className="absolute inset-0" fill="#dcdcdc">
      <path d="M170 1197L217 1150V1198C200 1190 185 1190 170 1197Z" />
      <path d="M103 1265V1253L153 1213L157 1217C148 1226 147 1236 156 1241L217 1280V1312L126 1268C118 1264 110 1264 103 1265Z" />
      <path d="M1097 523L1123 547C1132 556 1144 556 1150 550L1158 541L1163 545L1097 610V600C1106 590 1106 580 1097 570Z" />
      <path d="M529 870H557C500 890 470 915 488 950H465C445 915 470 885 529 870Z" />
      <path d="M530 870H565L660 950H610Z" />
      <path d="M825 870H846L722 970H690Z" />
      <path d="M393 975C410 950 430 944 455 944H470C440 950 425 960 412 975Z" />
    </svg>
  );
}

function Para({ num, children }) {
  return (
    <div className="grid grid-cols-[37px_1fr] pl-[53px] text-[25.05px] leading-[32.5px] whitespace-nowrap">
      <div>{num}.</div>
      <div>{children}</div>
    </div>
  );
}

const Tri = ({ after = "mr-[12px]" }) => <span className={`inline-block align-middle w-0 h-0 ml-[9px] mb-[3px] border-y-[4px] border-y-transparent border-l-[5px] border-l-[#222] ${after}`} />;

export default function App() {
  return (
    <div className="relative w-[1241px] h-[1755px] overflow-hidden bg-white text-[#222] font-['Liberation_Serif',serif] pl-[97px] pt-[53px]">
      <Watermark />
      <div className="relative w-[1091px] h-[1590px] border-x-[6.5px] border-y-[5px] border-[#4f81bd] p-[2px]">
        <div className="flex flex-col h-full border-2 border-[#5f92cf]">
          <div className="flex items-end justify-between h-[52px] pl-[20px] pr-[57px]">
            <span className="inline-block origin-bottom scale-y-[1.12] font-bold text-[24px] text-[#0f2a66] leading-[30px] mb-[3px] tracking-[-0.9px]">USIT6P4</span>
            <span className="inline-block origin-bottom scale-y-[1.1] italic text-[30px] text-[#7030a0] leading-[38px] whitespace-nowrap">Principles of Geographic Information Systems Practical</span>
          </div>
          <div className="h-[10px] ml-[20px] mr-[14px] bg-[#c0504d]" />
          <div className="mt-[15px]">
            <Para num="11">
              You will notice that the map image does not change after configuring the Atlas settings. Go<br />
              to Atlas<Tri /> Preview Atlas.
            </Para>
          </div>
          <div className="ml-[83px] mt-[2px]">
            <QgisWindow
              cfg={big}
              atlasOpen
              hRuler={{ width: 540, zero: 48.5, scale: 76.2, labels: [0, 200, 250, 300] }}
              vRuler={{ height: 536, zero: 105, scale: 76.5 }}
            >
              <div className="absolute left-[30px] top-[105px] w-[454px] h-[321px] bg-white shadow-[3px_3px_0_#9a9a9a]">
                <div className="absolute left-[22px] top-[52px] w-[400px] h-[219px] border border-dashed border-[#3a1545]">
                  <HawaiiMap />
                  <Handles />
                </div>
              </div>
            </QgisWindow>
          </div>
          <div className="mt-[4px]">
            <Para num="12">
              Now you will see the map refresh and show how individual map will look like. Notice that it<br />
              shows the current feature number from the coverage layer at the bottom right.
            </Para>
          </div>
          <div className="ml-[109px] mt-[2px]">
            <QgisWindow
              cfg={small}
              atlasOn
              hRuler={{ width: 509, zero: 47, scale: 71.7, labels: [0, 50, 100, 150, 200, 250, 300] }}
              vRuler={{ height: 402, zero: 100, scale: 71.7 }}
            >
              <div className="absolute left-[28px] top-[100px] w-[428px] h-[400px] bg-white shadow-[3px_3px_0_#9a9a9a]">
                <div className="absolute left-[22px] top-[49px] w-[377px] h-[206px] border border-dashed border-[#3a1545]">
                  <OahuMap />
                  <Handles />
                </div>
              </div>
            </QgisWindow>
          </div>
          <div className="mt-[4px]">
            <Para num="13">
              You can preview how the map will look for each of the county polygons. Go to Atlas<Tri after="mr-0" /><br />
              NextFeature.
            </Para>
          </div>
          <div className="flex mt-auto pl-[8px]">
            <div className="flex flex-col w-[977px] pt-[9px]">
              <div className="h-[11px] ml-[21px] mr-[6px] bg-[#7030a0]" />
              <div className="flex h-[50px] pt-[14px] items-center whitespace-nowrap text-[27px]">
                <span className="inline-block shrink-0 origin-center scale-y-[1.08] w-[366px] tracking-[-1.2px]">T.Y.B.Sc.(IT) SEMESTER VI</span>
                <span className="inline-block shrink-0 origin-center scale-y-[1.08] tracking-[0.1px]">Western College of Commerce &amp; Business Management</span>
              </div>
            </div>
            <div className="flex flex-col items-center w-[57px] h-[54px]">
              <div className="w-full h-[3.5px] bg-[#9bbb59]" />
              <div className="h-[39.5px] flex items-center text-[26px] text-[#111] font-['Open_Sans',sans-serif]">147</div>
              <div className="w-full h-[11px] bg-[#9bbb59]" />
            </div>
          </div>
        </div>
      </div>
    </div>
  );
}
